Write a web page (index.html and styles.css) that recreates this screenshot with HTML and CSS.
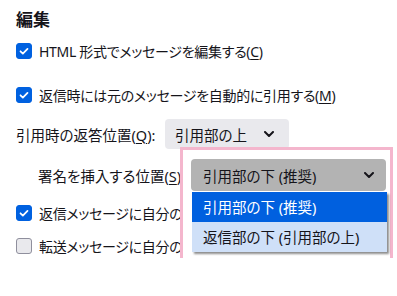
FILE: index.html
```html
<!DOCTYPE html>
<html lang="ja">
<head>
    <meta charset="UTF-8">
    <meta name="viewport" content="width=device-width, initial-scale=1.0">
    <title>編集</title>
    <link rel="stylesheet" href="styles.css">
</head>
<body>
    <div class="pane">
        <h1>編集</h1>

        <!-- Compose options -->
        <label class="check-row row-html">
            <span class="box checked"><svg viewBox="0 0 16 16"><path d="M4 8.3l2.7 2.7L12 5.5"/></svg></span>
            <span class="text">HTML 形式でメッセージを編集する(<u>C</u>)</span>
        </label>
        <label class="check-row row-quote">
            <span class="box checked"><svg viewBox="0 0 16 16"><path d="M4 8.3l2.7 2.7L12 5.5"/></svg></span>
            <span class="text">返信時には元のメッセージを自動的に引用する(<u>M</u>)</span>
        </label>

        <div class="select-row row-reply">
            <span class="label">引用時の返答位置(<u>Q</u>):</span>
            <div class="select">
                <span>引用部の上</span>
                <svg class="chevron" viewBox="0 0 10 6"><path d="M1 1l4 4 4-4"/></svg>
            </div>
        </div>

        <div class="select-row row-sig">
            <span class="label">署名を挿入する位置(<u>S</u>):</span>
            <div class="select-wrap">
                <div class="highlight"></div>
                <div class="select open">
                    <span>引用部の下 (推奨)</span>
                    <svg class="chevron" viewBox="0 0 10 6"><path d="M1 1l4 4 4-4"/></svg>
                </div>
                <ul class="dropdown">
                    <li class="selected">引用部の下 (推奨)</li>
                    <li>返信部の下 (引用部の上)</li>
                </ul>
            </div>
        </div>

        <label class="check-row row-reply-sig">
            <span class="box checked"><svg viewBox="0 0 16 16"><path d="M4 8.3l2.7 2.7L12 5.5"/></svg></span>
            <span class="text">返信メッセージに自分の署名を挿入する(<u>R</u>)</span>
        </label>
        <label class="check-row row-fwd-sig">
            <span class="box"></span>
            <span class="text">転送メッセージに自分の署名を挿入する(<u>F</u>)</span>
        </label>
    </div>
</body>
</html>
```

FILE: styles.css
```css
* {
    box-sizing: border-box;
    margin: 0;
    padding: 0;
}
body {
    font-family: 'Noto Sans', 'Noto Sans CJK JP', sans-serif;
    font-feature-settings: "palt";
    background: #fff;
    color: #15141a;
    font-size: 14.5px;
    overflow: hidden;
    white-space: nowrap;
}
.pane {
    padding: 8px 0 0 16px;
}
h1 {
    font-size: 17px;
    font-weight: 700;
    line-height: 24px;
    height: 24px;
}
u {
    text-decoration-thickness: 1px;
    text-underline-offset: 2px;
}

/* Checkbox rows */
.check-row {
    display: flex;
    align-items: center;
    gap: 7px;
    height: 24px;
}
.check-row .text {
    font-size: 14px;
    letter-spacing: -0.3px;
}
.row-html { margin-top: 7px; }
.row-quote { margin-top: 20px; }
.row-reply-sig { margin-top: 10px; }
.row-fwd-sig { margin-top: 9px; }
.box {
    width: 16px;
    height: 16px;
    flex: none;
    border-radius: 3px;
    background: #e9e9ed;
    border: 1px solid #8f8f9d;
    display: flex;
}
.box.checked {
    background: #0061e0;
    border-color: #0061e0;
}
.box svg {
    width: 14px;
    height: 14px;
    fill: none;
    stroke: #fff;
    stroke-width: 2;
    stroke-linecap: round;
    stroke-linejoin: round;
}

/* Select rows */
.select-row {
    display: flex;
    align-items: center;
}
.label {
    flex: none;
}
.row-reply {
    margin-top: 12px;
    height: 30px;
}
.row-reply .label {
    width: 149px;
}
.row-sig {
    margin-top: 10px;
    height: 32px;
    padding-left: 22px;
}
.row-sig .label {
    width: 153px;
}
.select {
    display: flex;
    align-items: center;
    justify-content: space-between;
    width: 124px;
    height: 30px;
    padding: 0 15px 0 10px;
    background: #e9e9ed;
    border-radius: 4px;
}
.chevron {
    width: 10px;
    height: 6px;
    fill: none;
    stroke: #15141a;
    stroke-width: 2;
    stroke-linecap: round;
    stroke-linejoin: round;
}
.select-wrap {
    position: relative;
}
.select.open {
    position: relative;
    z-index: 2;
    width: 195px;
    height: 32px;
    padding: 0 12px;
    background: #b3b3b3;
}

/* Annotation frame drawn over the page */
.highlight {
    position: absolute;
    z-index: 1;
    left: -11px;
    top: -12px;
    width: 213px;
    height: 115px;
    background: #fff;
    border: 3px solid #f4b6cd;
}
.dropdown {
    position: absolute;
    z-index: 3;
    left: 1px;
    top: 33px;
    width: 195px;
    list-style: none;
    background: #cfe0f8;
    box-shadow: 2px 2px 2px rgba(0, 0, 0, 0.45);
}
.dropdown li {
    height: 30px;
    line-height: 30px;
    padding-left: 11px;
}
.dropdown li.selected {
    background: #0060df;
    color: #fff;
}
```
